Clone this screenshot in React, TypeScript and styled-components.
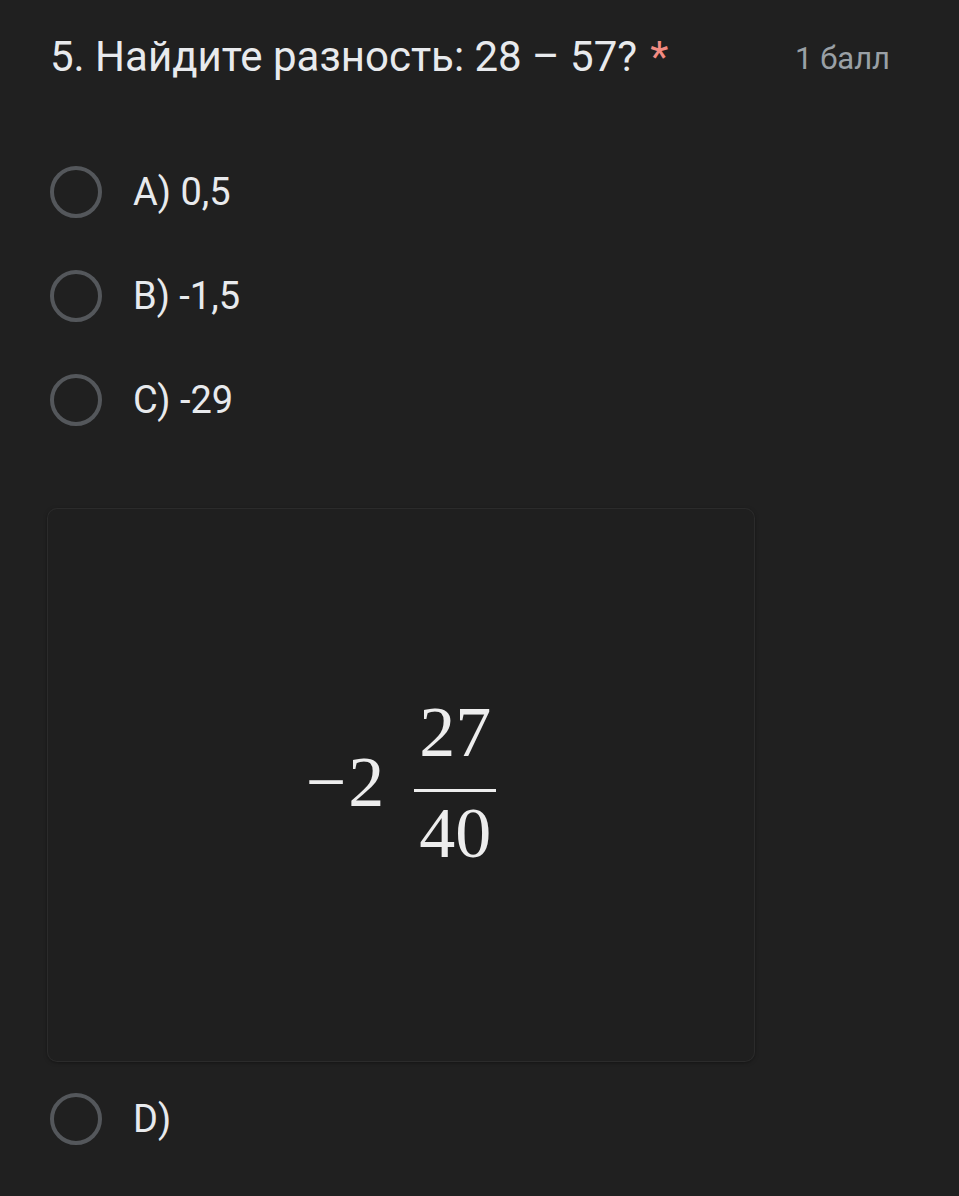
import styled, { createGlobalStyle } from 'styled-components';

const GlobalStyle = createGlobalStyle`
	html, body {
		margin: 0;
		padding: 0;
		background-color: #202020;
	}

	body {
		font-family: Roboto, 'Noto Sans', Arial, sans-serif;
		color: #e8eaed;
	}
`;

const Page = styled.div`
	min-height: 1196px;
	padding: 29px 69px 0 48px;
	box-sizing: border-box;
`;

const Header = styled.div`
	display: flex;
	justify-content: space-between;
	align-items: flex-start;
	padding-left: 2px;
`;

const Title = styled.h1`
	margin: 0;
	font-size: 42px;
	font-weight: 400;
	line-height: 56px;
	color: #e8eaed;

	span {
		color: #f28b82;
		margin-left: 13px;
	}
`;

const Points = styled.div`
	font-size: 31px;
	line-height: 56px;
	padding-top: 2px;
	color: #9aa0a6;
`;

const Options = styled.div`
	margin-top: 53px;
	display: flex;
	flex-direction: column;
`;

const Option = styled.label`
	display: flex;
	align-items: center;
	height: 104px;
	padding-left: 2px;
	font-size: 38px;
	color: #e8eaed;
`;

const Radio = styled.span`
	width: 52px;
	height: 52px;
	box-sizing: border-box;
	border: 4px solid #54575b;
	border-radius: 50%;
	flex-shrink: 0;
	margin-right: 31px;
`;

const ImageCard = styled.div<{ $height: number }>`
	margin-top: 57px;
	margin-bottom: 6px;
	width: 706px;
	height: ${(p) => p.$height}px;
	border-radius: 9px;
	background-color: #1f1f1f;
	box-shadow: 0 0 0 1px #2b2b2b, 0 1px 4px rgba(0, 0, 0, 0.55);
	display: flex;
	align-items: center;
	justify-content: center;
`;

const Formula = styled.div`
	display: flex;
	align-items: center;
	font-family: 'Liberation Serif', 'Times New Roman', serif;
	font-size: 72px;
	color: #ededed;
	transform: translate(0px, -3px);
`;

const Whole = styled.span`
	line-height: 72px;
	margin-right: 28px;
	letter-spacing: 2px;
`;

const Fraction = styled.span`
	display: inline-flex;
	flex-direction: column;
	align-items: center;
	width: 82px;
`;

const Num = styled.span`
	line-height: 72px;
`;

const Bar = styled.span`
	display: block;
	width: 82px;
	height: 3px;
	background-color: #ededed;
	margin: 21px 0 5px;
`;

export default function App() {
	return (
		<>
			<GlobalStyle />
			<Page>
				<Header>
					<Title>
						5. Найдите разность: 28 – 57?<span>*</span>
					</Title>
					<Points>1 балл</Points>
				</Header>
				<Options>
					<Option>
						<Radio />
						A) 0,5
					</Option>
					<Option>
						<Radio />
						B) -1,5
					</Option>
					<Option>
						<Radio />
						C) -29
					</Option>
				</Options>
				<ImageCard $height={552}>
					<Formula>
						<Whole>−2</Whole>
						<Fraction>
							<Num>27</Num>
							<Bar />
							<Num>40</Num>
						</Fraction>
					</Formula>
				</ImageCard>
				<Option>
					<Radio />
					D)
				</Option>
			</Page>
		</>
	);
}
